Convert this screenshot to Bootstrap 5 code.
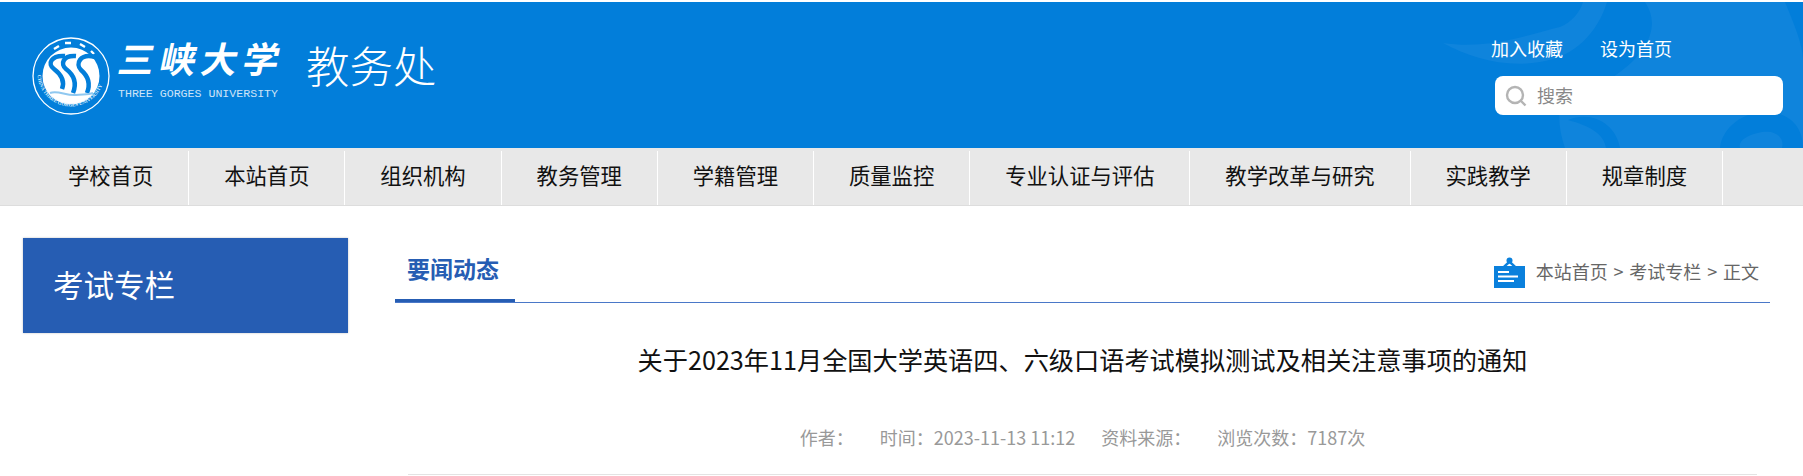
<!DOCTYPE html>
<html lang="zh-CN">
<head>
<meta charset="utf-8">
<title>三峡大学教务处</title>
<link rel="stylesheet" href="https://cdn.jsdelivr.net/npm/bootstrap@5.3.0/dist/css/bootstrap.min.css">
<style>
html,body{height:476px;overflow:hidden}
body{font-family:"Noto Sans CJK SC","Liberation Sans",sans-serif;background:#fff;padding-top:2px;color:#000}
a{text-decoration:none;color:inherit}
.hd{height:146px;background:#027eda;position:relative;overflow:hidden}
.hd-deco{position:absolute;left:0;top:0;width:1803px;height:146px}
.hd-inner{position:relative;height:146px;padding:33px 20px 0 32px}
.emblem{width:78px;height:78px;flex:none;margin-top:2px}
.brand{margin-left:8px;width:162px;color:#fff}
.brand-cn{font-size:36px;line-height:44px;font-weight:700;letter-spacing:5.500px;white-space:nowrap;transform:skewX(-12deg);transform-origin:left bottom;height:44px;margin-left:-3px}
.brand-en{font-family:"Liberation Mono",monospace;font-size:11.600px;line-height:12px;margin-top:9px;white-space:nowrap;opacity:.8}
.dept{font-size:43.500px;line-height:60px;color:#fff;margin-left:26px;font-weight:300;white-space:nowrap}
.tools{width:288px}
.tool-links{font-size:18px;line-height:26px;color:#fff;gap:37px;margin-left:-4px}
.search-box{height:39px;margin-top:15px;background:#fff;border-radius:8px;padding-left:10px;gap:10px;font-size:18px;color:#888}
.mainnav{height:58px;background:#e8e8e8;border-bottom:1px solid #ddd;padding:3px 0 0 33px;list-style:none;margin:0}
.mainnav li{border-right:1px solid #fff;height:54px;padding:0 34.950px;font-size:21.330px;line-height:48px;white-space:nowrap;color:#111}
.content{padding:32px 33px 0 23px}
.side-title{width:325px;height:95px;flex:none;background:#265db3;color:#fff;font-size:30.500px;line-height:92px;padding-left:30px;box-shadow:0 0 2px rgba(0,0,0,.25)}
.main-col{margin-left:47px;flex:1;min-width:0}
.tabbar{height:65px;border-bottom:1.500px solid #4a78c8}
.tab-on{width:120px;height:65px;border-bottom:3.500px solid #265db3;color:#265db3;font-size:23px;font-weight:700;line-height:62px;padding-left:12px;white-space:nowrap}
.crumb{font-size:18px;color:#666;line-height:26px;padding-right:11px;gap:11px;padding-bottom:14px;word-spacing:1.800px}
.crumb-txt{margin-top:-4px}
.art-title{font-size:25.200px;line-height:36px;text-align:center;margin:0;padding-top:38px;font-weight:400;color:#111}
.art-meta{font-size:18px;line-height:26px;color:#999;margin-top:47px;gap:26px;white-space:nowrap}
.art-line{height:1px;background:#e3e3e3;margin:24px 13px 0}
</style>
</head>
<body>
<header class="hd">
  <svg class="hd-deco" viewBox="0 0 1803 146" aria-hidden="true">
    <path fill="#0f84dc" d="M1443 41C1490 48 1530 32 1560 25C1572 20 1580 10 1583 0H1607C1598 30 1575 55 1540 60C1505 66 1470 56 1443 41Z"/>
    <path fill="#0f84dc" d="M1645 0C1660 22 1650 48 1620 70C1600 85 1578 96 1560 104C1558 118 1560 132 1565 146H1803V0Z"/>
    <path fill="#027eda" d="M1568 118C1592 108 1616 122 1620 146H1606C1604 132 1590 124 1568 118Z"/>
    <path fill="#027eda" d="M1720 146C1722 125 1745 108 1770 110C1790 112 1803 125 1803 146H1782C1785 135 1775 128 1762 130C1745 133 1738 140 1740 146Z"/>
    <path fill="#027eda" d="M1785 0C1793 20 1803 42 1803 58V0Z"/>
  </svg>
  <div class="hd-inner d-flex justify-content-between">
    <div class="d-flex align-items-start">
      <svg class="emblem" viewBox="0 0 78 78" role="img" aria-label="校徽">
        <defs><path id="ringtext" d="M5.500 36a33.500 33.500 0 0 0 67 0"/></defs>
        <circle cx="39" cy="39" r="38" fill="none" stroke="#fff" stroke-width="1.300"/>
        <circle cx="39" cy="39" r="28.500" fill="#fff"/>
        <text font-family="Liberation Serif,serif" font-size="5" font-weight="700" fill="#dff0fc"><textPath href="#ringtext" startOffset="2%">CHINA THREE GORGES UNIVERSITY</textPath></text>
        <path d="M22 12l5-3M33 6h6M48 7l5 3M59 14l3 3" stroke="#fff" stroke-width="2.400" fill="none"/>
        <g fill="none" stroke="#027eda">
          <path stroke-width="4.500" d="M33 19C19 18 15 27 22 32C30 38 33 44 30 52"/>
          <path stroke-width="4.500" d="M44 19C31 18 28 27 34 32C42 38 45 46 41 56"/>
          <path stroke-width="4.500" d="M63 20C48 16 43 27 49 33C56 39 59 46 55 56"/>
        </g>
        <path d="M18 56C26 53 34 59 44 58C50 57 56 58 61 56" stroke="#8fc8f0" stroke-width="2" fill="none"/>
      </svg>
      <div class="brand">
        <div class="brand-cn">三峡大学</div>
        <div class="brand-en">THREE GORGES UNIVERSITY</div>
      </div>
      <div class="dept">教务处</div>
    </div>
    <div class="tools">
      <div class="tool-links d-flex"><a href="#">加入收藏</a><a href="#">设为首页</a></div>
      <div class="search-box d-flex align-items-center">
        <svg width="22" height="22" viewBox="0 0 22 22" fill="none" stroke="#b4b4b4" stroke-width="2.400" aria-hidden="true"><circle cx="10" cy="10" r="8"/><path d="M16 16l4.500 4.500"/></svg>
        <span>搜索</span>
      </div>
    </div>
  </div>
</header>
<ul class="mainnav d-flex">
  <li>学校首页</li><li>本站首页</li><li>组织机构</li><li>教务管理</li><li>学籍管理</li><li>质量监控</li><li>专业认证与评估</li><li>教学改革与研究</li><li>实践教学</li><li>规章制度</li>
</ul>
<div class="content d-flex align-items-start">
  <aside class="side-title">考试专栏</aside>
  <main class="main-col">
    <div class="tabbar d-flex justify-content-between align-items-end">
      <div class="tab-on">要闻动态</div>
      <div class="crumb d-flex align-items-center">
        <svg width="31" height="31" viewBox="0 0 31 31" aria-hidden="true">
          <rect x="0" y="9" width="31" height="22" fill="#0a80dc"/>
          <path d="M8 10L15.500 3L23 10H19.500L15.500 6.500L11.500 10Z" fill="#0a80dc"/>
          <circle cx="15.500" cy="3.500" r="3" fill="#0a80dc"/>
          <path d="M4 15h11M4 19.500h20M4 24h16" stroke="#fff" stroke-width="1.800"/>
        </svg>
        <span class="crumb-txt">本站首页 &gt; 考试专栏 &gt; 正文</span>
      </div>
    </div>
    <h1 class="art-title">关于2023年11月全国大学英语四、六级口语考试模拟测试及相关注意事项的通知</h1>
    <div class="art-meta d-flex justify-content-center">
      <span>作者&#xFF1A;</span><span>时间&#xFF1A;2023-11-13 11:12</span><span>资料来源&#xFF1A;</span><span>浏览次数&#xFF1A;7187次</span>
    </div>
    <div class="art-line"></div>
  </main>
</div>
</body>
</html>
